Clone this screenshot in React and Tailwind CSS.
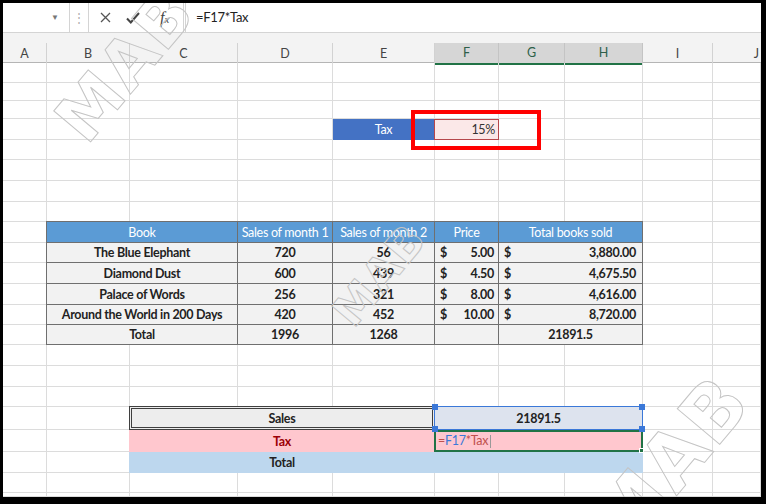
import React from "react";

const ROWS = 22;
const COLS = 10;

function Bg() {
  const cells = [];
  for (let r = 1; r <= ROWS; r++) {
    for (let c = 1; c <= COLS; c++) {
      cells.push(
        <div
          key={r + "-" + c}
          className="border-r border-b border-[#dcdcdc]"
          style={{ gridRow: r, gridColumn: c }}
        />
      );
    }
  }
  return cells;
}

const tb = "border-r border-b border-[#6f6f6f] pt-[2px]";

function Row({ row, name, m1, m2, price, total }) {
  return (
    <>
      <div className={`${row} col-start-2 col-span-2 -ml-px border-l ${tb} bg-[#f2f2f2] flex items-center justify-center font-bold`}>{name}</div>
      <div className={`${row} col-start-4 ${tb} bg-[#f2f2f2] flex items-center justify-center font-bold`}>{m1}</div>
      <div className={`${row} col-start-5 ${tb} bg-[#f2f2f2] flex items-center justify-center font-bold`}>{m2}</div>
      <div className={`${row} col-start-6 ${tb} bg-[#f2f2f2] flex items-center justify-between pl-[5px] pr-[4px] font-bold`}>
        <span>$</span>
        <span>{price}</span>
      </div>
      <div className={`${row} col-start-7 col-span-2 ${tb} bg-[#f2f2f2] flex items-center justify-between pl-[5px] pr-[6px] font-bold`}>
        <span>$</span>
        <span>{total}</span>
      </div>
    </>
  );
}

function Handle({ pos }) {
  return <div className={`absolute w-[6px] h-[6px] bg-[#3b78d8] ${pos}`} />;
}

export default function App() {
  return (
    <div className="relative w-[766px] h-[504px] overflow-hidden bg-white border-t-[3px] border-l-[3px] border-r-[5px] border-b-[7px] border-black font-[Lato,sans-serif] text-[12.5px] tracking-[-0.3px] text-[#222] flex flex-col">
      {/* formula bar */}
      <div className="h-[30px] flex bg-white border-b border-[#d4d4d4]">
        <div className="w-[67px] relative border-r border-[#d4d4d4] bg-white">
          <span className="absolute left-[48px] top-[8px] text-[8px] text-[#777]">▼</span>
        </div>
        <div className="w-[18px] flex items-center justify-center text-[#b0b0b0] text-[12px]">⋮</div>
        <div className="w-[96px] flex items-center border-l border-r border-[#d4d4d4] bg-white">
          <svg className="ml-[11px]" width="11" height="11" viewBox="0 0 11 11">
            <path d="M1 1L10 10M10 1L1 10" stroke="#555" strokeWidth="1.3" fill="none" />
          </svg>
          <svg className="ml-[15px]" width="14" height="12" viewBox="0 0 14 12">
            <path d="M1 6.5L4.8 10.5L13 1" stroke="#444" strokeWidth="2" fill="none" />
          </svg>
          <span className="ml-[20px] font-['Liberation_Serif',serif] italic text-[16px] text-[#444] tracking-normal">
            f<span className="text-[11px]">x</span>
          </span>
        </div>
        <div className="flex-1 flex items-center pl-[10px] ml-px border-l border-[#d4d4d4] text-[13px] text-[#222]">=F17*Tax</div>
      </div>
      <div className="h-[10px] bg-[#f3f3f3]" />

      {/* column headers */}
      <div className="h-[20px] grid grid-cols-[44px_83px_108px_95px_102px_64px_66px_78px_70px_1fr] bg-[#f3f3f3] border-b border-[#b5b5b5] text-[12.5px] text-[#444] tracking-normal">
        {["A", "B", "C", "D", "E"].map((l) => (
          <div key={l} className="flex items-center justify-center pt-px border-r border-[#d2d2d2]">{l}</div>
        ))}
        {["F", "G", "H"].map((l) => (
          <div key={l} className="flex items-center justify-center pt-px border-r border-[#c4c4c4] bg-[#d6d6d6] border-b-2 border-b-[#217346] -mb-px text-[#2d5f49]">{l}</div>
        ))}
        <div className="flex items-center justify-center pt-px border-r border-[#d2d2d2]">I</div>
        <div className="flex items-center justify-end pt-px pr-[2px]">J</div>
      </div>

      {/* sheet grid */}
      <div className="flex-1 grid grid-cols-[44px_83px_108px_95px_102px_64px_66px_78px_70px_1fr] grid-rows-[20px_18px_18px_21px_20px_21px_21px_20px_21px_20px_21px_21px_20px_20px_21px_21px_20px_23px_22px_21px_20px_1fr]">
        <Bg />

        {/* Tax named cell */}
        <div className="row-start-4 col-start-5 bg-[#4472c4] text-white flex items-center justify-center pt-[2px] border-r border-b border-[#4472c4]">Tax</div>
        <div className="row-start-4 col-start-6 -ml-px bg-[#fbe8e8] border border-[#b5474b] flex items-center justify-end pt-[2px] pr-[3px] text-[#333]">15%</div>

        {/* main table header */}
        <div className={`row-start-9 col-start-2 col-span-2 -ml-px -mt-px border-l border-t ${tb} bg-[#5b9bd5] text-white flex items-center justify-center`}>Book</div>
        <div className={`row-start-9 col-start-4 -mt-px border-t ${tb} bg-[#5b9bd5] text-white flex items-center justify-center`}>Sales of month 1</div>
        <div className={`row-start-9 col-start-5 -mt-px border-t ${tb} bg-[#5b9bd5] text-white flex items-center justify-center`}>Sales of month 2</div>
        <div className={`row-start-9 col-start-6 -mt-px border-t ${tb} bg-[#5b9bd5] text-white flex items-center justify-center`}>Price</div>
        <div className={`row-start-9 col-start-7 col-span-2 -mt-px border-t ${tb} bg-[#5b9bd5] text-white flex items-center justify-center`}>Total books sold</div>

        <Row row="row-start-10" name="The Blue Elephant" m1="720" m2="56" price="5.00" total="3,880.00" />
        <Row row="row-start-11" name="Diamond Dust" m1="600" m2="439" price="4.50" total="4,675.50" />
        <Row row="row-start-12" name="Palace of Words" m1="256" m2="321" price="8.00" total="4,616.00" />
        <Row row="row-start-13" name="Around the World in 200 Days" m1="420" m2="452" price="10.00" total="8,720.00" />

        <div className={`row-start-14 col-start-2 col-span-2 -ml-px border-l ${tb} bg-[#f2f2f2] flex items-center justify-center font-bold`}>Total</div>
        <div className={`row-start-14 col-start-4 ${tb} bg-[#f2f2f2] flex items-center justify-center font-bold`}>1996</div>
        <div className={`row-start-14 col-start-5 ${tb} bg-[#f2f2f2] flex items-center justify-center font-bold`}>1268</div>
        <div className={`row-start-14 col-start-6 ${tb} bg-[#f2f2f2]`} />
        <div className={`row-start-14 col-start-7 col-span-2 ${tb} bg-[#f2f2f2] flex items-center justify-center font-bold`}>21891.5</div>

        {/* bottom summary */}
        <div className="row-start-18 col-start-3 col-span-3 -mt-px -ml-px border-[3px] border-double border-[#3f3f3f] bg-[#ededed] flex items-center justify-center pt-[2px] font-bold">Sales</div>
        <div className="row-start-18 col-start-6 col-span-3 -mt-px -ml-px relative bg-[#dde3ee] border-[1.5px] border-[#3b78d8] flex items-center justify-center pt-[2px] font-bold z-10">
          21891.5
          <Handle pos="-left-[3px] -top-[3px]" />
          <Handle pos="-right-[3px] -top-[3px]" />
          <Handle pos="-left-[3px] -bottom-[3px]" />
          <Handle pos="-right-[3px] -bottom-[3px]" />
        </div>

        <div className="row-start-19 col-start-3 col-span-3 -ml-px bg-[#ffc7ce] flex items-center justify-center pt-[2px] font-bold text-[#9c0006]">Tax</div>
        <div className="row-start-19 col-start-6 col-span-3 -ml-px relative bg-[#ffc7ce] border-2 border-[#217346] flex items-center pt-px pl-[2px] text-[#c0504d]">
          <span>=</span>
          <span className="text-[#3b78d8]">F17</span>
          <span>*Tax</span>
          <span className="ml-[2px] w-px h-[13px] bg-[#999]" />
          <div className="absolute -right-[3px] -bottom-[3px] w-[5px] h-[5px] bg-[#217346] border border-white" />
        </div>

        <div className="row-start-20 col-start-3 col-span-6 -ml-px bg-[#bdd7ee] grid grid-cols-[306px_1fr]">
          <div className="flex items-center justify-center pt-[2px] font-bold">Total</div>
          <div />
        </div>
      </div>

      {/* Tax highlight rectangle */}
      <div className="absolute left-[408px] top-[107px] w-[130px] h-[40px] border-4 border-[#ff0000] pointer-events-none" />

      {/* watermarks */}
      <div className="absolute left-[36px] top-[30px] rotate-[-50deg] font-['DejaVu_Sans',sans-serif] font-bold text-[66px] leading-none tracking-[2px] text-transparent [-webkit-text-stroke:1px_#c4c4c4] pointer-events-none">MAB</div>
      <div className="absolute left-[318px] top-[250px] rotate-[-50deg] font-['DejaVu_Sans',sans-serif] font-bold text-[44px] leading-none tracking-[2px] text-transparent [-webkit-text-stroke:1px_#c4c4c4] pointer-events-none">MAB</div>
      <div className="absolute left-[568px] top-[422px] rotate-[-50deg] font-['DejaVu_Sans',sans-serif] font-bold text-[76px] leading-none tracking-[2px] text-transparent [-webkit-text-stroke:1px_#c4c4c4] pointer-events-none">MAB</div>
    </div>
  );
}
